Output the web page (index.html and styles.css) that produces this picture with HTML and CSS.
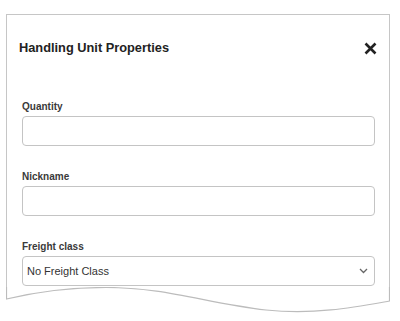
FILE: index.html
```html
<!DOCTYPE html>
<html lang="en">
<head>
    <meta charset="UTF-8">
    <meta name="viewport" content="width=device-width, initial-scale=1.0">
    <title>Handling Unit Properties</title>
    <link rel="stylesheet" href="styles.css">
</head>
<body>

<div class="sheet">
    <div class="card">
        <div class="card-header">
            <h2 class="card-title">Handling Unit Properties</h2>
            <button class="close-btn" aria-label="Close">
                <svg width="13" height="13" viewBox="0 0 13 13">
                    <path d="M1.5 1.5 L11.5 11.5 M11.5 1.5 L1.5 11.5" stroke="#222" stroke-width="2.6" fill="none"/>
                </svg>
            </button>
        </div>

        <div class="fields">
            <div class="field">
                <label for="quantity">Quantity</label>
                <input type="text" id="quantity">
            </div>
            <div class="field">
                <label for="nickname">Nickname</label>
                <input type="text" id="nickname">
            </div>
            <div class="field">
                <label for="freight">Freight class</label>
                <div class="select-wrap">
                    <select id="freight">
                        <option>No Freight Class</option>
                        <option>50</option>
                        <option>55</option>
                        <option>60</option>
                    </select>
                    <svg class="chevron" width="9" height="6" viewBox="0 0 9 6">
                        <path d="M1 1 L4.5 4.5 L8 1" stroke="#666" stroke-width="1.3" fill="none"/>
                    </svg>
                </div>
            </div>
        </div>
    </div>
    <!-- torn paper edge -->
    <svg class="tear" width="384" height="28" viewBox="0 0 384 28">
        <path d="M0.5 0 L0.5 12 C 30 5, 60 0.5, 100 0.5 C 160 0.5, 200 16, 260 23 C 310 28, 350 20, 383.5 14 L383.5 0"
              stroke="#bcbcbc" stroke-width="1.2" fill="#fff"/>
    </svg>
</div>

</body>
</html>
```

FILE: styles.css
```css
body {
    margin: 0;
    font-family: "Liberation Sans", Arial, sans-serif;
    background-color: #ffffff;
    color: #222;
}
.sheet {
    margin: 14px 0 0 6px;
    width: 384px;
}
.card {
    border: 1px solid #c6c6c6;
    border-bottom: none;
    padding: 21px 12px 1px 12px;
}
.card-header {
    display: flex;
    justify-content: space-between;
    align-items: center;
    height: 24px;
}
.card-title {
    margin: 0;
    font-size: 12.8px;
    line-height: 24px;
    font-weight: bold;
    color: #222;
}
.close-btn {
    border: none;
    background: none;
    padding: 0;
    width: 13px;
    height: 13px;
    cursor: pointer;
}
.close-btn svg {
    display: block;
}
.fields {
    margin-top: 41px;
    padding: 0 2px 0 3px;
    display: flex;
    flex-direction: column;
    gap: 25px;
}
.field {
    display: flex;
    flex-direction: column;
}
.field label {
    font-size: 10px;
    line-height: 12px;
    font-weight: bold;
    color: #3a3a3a;
    margin-bottom: 3px;
}
.field input,
.field select {
    box-sizing: border-box;
    width: 100%;
    height: 30px;
    border: 1px solid #c4c4c4;
    border-radius: 4px;
    background: #fff;
    font-family: "Liberation Sans", Arial, sans-serif;
    font-size: 11px;
    color: #333;
    margin: 0;
}
.select-wrap {
    position: relative;
}
.field select {
    appearance: none;
    -webkit-appearance: none;
    padding: 0 0 0 4px;
}
.chevron {
    position: absolute;
    right: 7px;
    top: 12px;
}
.tear {
    display: block;
}
```
